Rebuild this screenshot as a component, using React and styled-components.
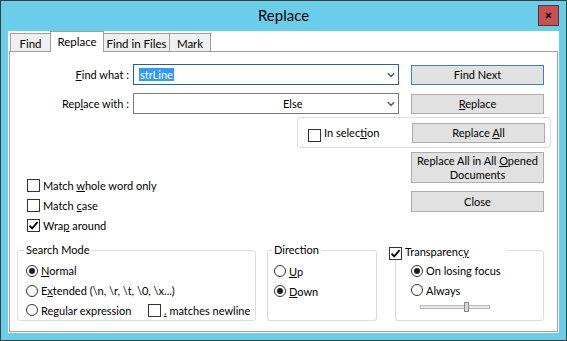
import React from 'react';
import styled, { createGlobalStyle } from 'styled-components';

const Global = createGlobalStyle`
  html, body { margin: 0; padding: 0; background: #fff; }
  body { font-family: Lato, "Liberation Sans", sans-serif; font-size: 11px; color: #000; }
  * { box-sizing: border-box; }
`;

const Window = styled.div`
  width: 567px;
  height: 341px;
  background: #6acdea;
  border: 1px solid #3d3d3d;
  display: flex;
  flex-direction: column;
`;

const TitleBar = styled.div`
  height: 30px;
  flex: none;
  display: grid;
  grid-template-columns: 1fr auto 1fr;
  align-items: center;
`;

const Title = styled.div`
  grid-column: 2;
  font-size: 15px;
  line-height: 18px;
  padding-bottom: 3px;
  color: #000;
`;

const CloseButton = styled.div`
  grid-column: 3;
  justify-self: end;
  align-self: start;
  margin: 4px 7px 0 0;
  width: 21px;
  height: 21px;
  background: #c75050;
  border: 1px solid #5a3030;
  display: flex;
  align-items: center;
  justify-content: center;
`;

const Client = styled.div`
  flex: 1;
  margin: 0 7px 7px 7px;
  background: #fff;
  display: flex;
  flex-direction: column;
`;

const TabStrip = styled.div`
  height: 20px;
  flex: none;
  display: flex;
  align-items: flex-end;
  padding-left: 2px;
`;

const Tab = styled.div`
  position: relative;
  z-index: ${p => (p.$active ? 2 : 1)};
  width: ${p => p.$w}px;
  height: ${p => (p.$active ? 21 : 18)}px;
  margin-bottom: ${p => (p.$active ? -1 : 0)}px;
  margin-left: ${p => (p.$first ? 0 : -1)}px;
  background: ${p => (p.$active ? '#fff' : '#f0f0f0')};
  border: 1px solid #a0a0a0;
  border-bottom: none;
  display: flex;
  align-items: center;
  justify-content: center;
  padding-top: ${p => (p.$active ? 0 : 2)}px;
  line-height: 14px;
  font-size: 11.5px;
`;

const Panel = styled.div`
  flex: 1;
  margin: 0 1px 1px 1px;
  border: 1px solid #a0a0a0;
  display: flex;
  flex-direction: column;
  padding-top: 12px;
`;

const TopGrid = styled.div`
  display: grid;
  grid-template-columns: 123px 164px 102px 12px 133px 7px;
  align-items: start;
`;

const LeftStack = styled.div`
  grid-column: 1 / 4;
  grid-row: 1;
  display: flex;
  flex-direction: column;
`;

const RightStack = styled.div`
  grid-column: 3 / 7;
  grid-row: 1;
  display: flex;
  flex-direction: column;
`;

const FieldRow = styled.div`
  display: grid;
  grid-template-columns: 123px 266px;
  align-items: center;
  height: 21px;
  margin-top: ${p => p.$mt || 0}px;
`;

const FieldLabel = styled.label`
  text-align: right;
  padding-right: 4px;
  white-space: nowrap;
`;

const Combo = styled.div`
  height: 21px;
  border: 1px solid ${p => (p.$focused ? '#305f8a' : '#7a7a7a')};
  background: #fff;
  display: flex;
  align-items: center;
  padding: 0 3px 0 ${p => p.$indent}px;
`;

const ComboText = styled.span`
  flex: 1;
  white-space: nowrap;
  line-height: 13px;
`;

const Selected = styled.span`
  display: inline-block;
  background: #3399ff;
  color: #fff;
  padding: 0 1px;
  line-height: 13px;
`;

const Key = styled.u`
  text-decoration: underline;
  text-underline-offset: 1px;
`;

const Button = styled.div`
  width: 133px;
  height: ${p => p.$h || 20}px;
  margin-left: ${p => (p.$inset ? 0 : 114)}px;
  margin-top: ${p => p.$mt || 0}px;
  flex: none;
  background: #e1e1e1;
  border: 1px solid ${p => (p.$default ? '#3f7fb5' : '#adadad')};
  display: flex;
  align-items: center;
  justify-content: center;
  text-align: center;
  line-height: 14px;
`;

const SelectionGroup = styled.div`
  margin-top: 3px;
  height: 31px;
  border: 1px solid #dcdcdc;
  border-radius: 3px;
  display: flex;
  align-items: center;
  padding: 0 5px 0 10px;
`;

const CheckRow = styled.div`
  display: flex;
  align-items: center;
  height: 13px;
  gap: 3px;
  flex: ${p => (p.$grow ? 1 : 'none')};
  margin-top: ${p => p.$mt || 0}px;
  white-space: nowrap;
  line-height: 13px;
`;

const Options = styled.div`
  display: flex;
  flex-direction: column;
  gap: 7px;
  margin-top: 65px;
  padding-left: 17px;
`;

const Box = styled.span`
  width: 13px;
  height: 13px;
  flex: none;
  border: 1px solid #333;
  background: #fff;
  display: flex;
  align-items: center;
  justify-content: center;
  margin-top: ${p => p.$mt || 0}px;
`;

const RadioDot = styled.span`
  width: 12px;
  height: 12px;
  flex: none;
  border-radius: 50%;
  border: 1px solid #333;
  background: #fff;
  display: flex;
  align-items: center;
  justify-content: center;
  &::after {
    content: '';
    width: 6px;
    height: 6px;
    border-radius: 50%;
    background: #1a1a1a;
    display: ${p => (p.$checked ? 'block' : 'none')};
  }
`;

const BottomRow = styled.div`
  display: flex;
  padding-left: 7px;
  margin-top: 11px;
`;

const Group = styled.fieldset`
  margin: 0 0 0 ${p => p.$ml || 0}px;
  width: ${p => p.$w}px;
  height: 78px;
  min-width: 0;
  border: 1px solid #dcdcdc;
  border-radius: 3px;
  padding: 4px 0 0 ${p => p.$pl}px;
  display: flex;
  flex-direction: column;
`;

const Legend = styled.legend`
  margin-left: ${p => p.$ml}px;
  padding: 0 ${p => (p.$w ? 0 : 2)}px;
  height: 14px;
  line-height: 14px;
  ${p => (p.$w ? `width: ${p.$w}px;` : '')}
  display: flex;
  align-items: flex-start;
  gap: 3px;
  white-space: nowrap;
`;

const LegendText = styled.span`
  margin-top: ${p => p.$mt || 0}px;
`;

const RadioRow = styled.div`
  display: flex;
  align-items: center;
  height: 20px;
  gap: 3px;
  white-space: nowrap;
`;

const RowText = styled.span`
  ${p => (p.$w ? `width: ${p.$w}px; flex: none;` : '')}
`;

const SliderRow = styled.div`
  height: 20px;
  padding: 2px 0 0 9px;
`;

const Slider = styled.div`
  position: relative;
  width: 70px;
  height: 10px;
  display: flex;
  align-items: center;
`;

const Track = styled.div`
  width: 100%;
  height: 4px;
  background: #e7e7e7;
  border: 1px solid #bcbcbc;
`;

const Thumb = styled.div`
  position: absolute;
  top: 0;
  width: 5px;
  height: 10px;
  background: #dadada;
  border: 1px solid #8a8a8a;
`;

const CheckMark = () => (
  <svg width="11" height="11" viewBox="0 0 11 11">
    <path d="M1.5 5.6 L4.2 8.4 L9.6 2" fill="none" stroke="#000" strokeWidth="1.8" />
  </svg>
);

const Chevron = () => (
  <svg width="8" height="6" viewBox="0 0 8 6">
    <path d="M0.8 1.2 L4 4.4 L7.2 1.2" fill="none" stroke="#606060" strokeWidth="1.5" />
  </svg>
);

const CloseX = () => (
  <svg width="7" height="7" viewBox="0 0 7 7">
    <path d="M1 1 L6 6 M6 1 L1 6" stroke="#000" strokeWidth="1.6" />
  </svg>
);

const Check = ({ checked, children, grow, mt, boxMt }) => (
  <CheckRow $grow={grow} $mt={mt}>
    <Box $mt={boxMt}>{checked && <CheckMark />}</Box>
    <span>{children}</span>
  </CheckRow>
);

const Radio = ({ checked, children, w, extra }) => (
  <RadioRow>
    <RadioDot $checked={checked} />
    <RowText $w={w}>{children}</RowText>
    {extra}
  </RadioRow>
);

export default function App() {
  const tabs = [
    { label: 'Find', w: 41 },
    { label: 'Replace', w: 54, active: true },
    { label: 'Find in Files', w: 67 },
    { label: 'Mark', w: 42 },
  ];
  const sliderValue = 0.68;
  return (
    <>
      <Global />
      <Window>
        <TitleBar>
          <Title>Replace</Title>
          <CloseButton>
            <CloseX />
          </CloseButton>
        </TitleBar>
        <Client>
          <TabStrip>
            {tabs.map((t, i) => (
              <Tab key={t.label} $w={t.w} $active={t.active} $first={i === 0}>
                {t.label}
              </Tab>
            ))}
          </TabStrip>
          <Panel>
            <TopGrid>
              <LeftStack>
                <FieldRow>
                  <FieldLabel>
                    <Key>F</Key>ind what :
                  </FieldLabel>
                  <Combo $focused $indent={5}>
                    <ComboText>
                      <Selected>strLine</Selected>
                    </ComboText>
                    <Chevron />
                  </Combo>
                </FieldRow>
                <FieldRow $mt={8}>
                  <FieldLabel>
                    Rep<Key>l</Key>ace with :
                  </FieldLabel>
                  <Combo $indent={149}>
                    <ComboText>Else</ComboText>
                    <Chevron />
                  </Combo>
                </FieldRow>
                <Options>
                  <Check>
                    Match <Key>w</Key>hole word only
                  </Check>
                  <Check>
                    Match <Key>c</Key>ase
                  </Check>
                  <Check checked>
                    Wra<Key>p</Key> around
                  </Check>
                </Options>
              </LeftStack>
              <RightStack>
                <Button $default $mt={1}>Find Next</Button>
                <Button $mt={9}>
                  <span>
                    <Key>R</Key>eplace
                  </span>
                </Button>
                <SelectionGroup>
                  <Check grow boxMt={5}>
                    In selec<Key>t</Key>ion
                  </Check>
                  <Button $inset>
                    <span>
                      Replace <Key>A</Key>ll
                    </span>
                  </Button>
                </SelectionGroup>
                <Button $mt={4} $h={31}>
                  <span>
                    Replace All in All <Key>O</Key>pened
                    <br />
                    Documents
                  </span>
                </Button>
                <Button $mt={8} $h={21}>Close</Button>
              </RightStack>
            </TopGrid>
            <BottomRow>
              <Group $w={239} $pl={8}>
                <Legend $ml={-2}>Search Mode</Legend>
                <Radio checked>
                  <Key>N</Key>ormal
                </Radio>
                <Radio>
                  E<Key>x</Key>tended (\n, \r, \t, \0, \x...)
                </Radio>
                <Radio
                  w={104}
                  extra={
                    <Check>
                      <Key>.</Key> matches newline
                    </Check>
                  }
                >
                  Re<Key>g</Key>ular expression
                </Radio>
              </Group>
              <Group $w={110} $ml={11} $pl={6}>
                <Legend $ml={-2}>Direction</Legend>
                <Radio>
                  <Key>U</Key>p
                </Radio>
                <Radio checked>
                  <Key>D</Key>own
                </Radio>
              </Group>
              <Group $w={149} $ml={18} $pl={15}>
                <Legend $ml={-22} $w={118}>
                  <Box $mt={4}>
                    <CheckMark />
                  </Box>
                  <LegendText $mt={2}>
                    Transparenc<Key>y</Key>
                  </LegendText>
                </Legend>
                <Radio checked>On losing focus</Radio>
                <Radio>Always</Radio>
                <SliderRow>
                  <Slider>
                    <Track />
                    <Thumb style={{ left: `${sliderValue * 65}px` }} />
                  </Slider>
                </SliderRow>
              </Group>
            </BottomRow>
          </Panel>
        </Client>
      </Window>
    </>
  );
}
